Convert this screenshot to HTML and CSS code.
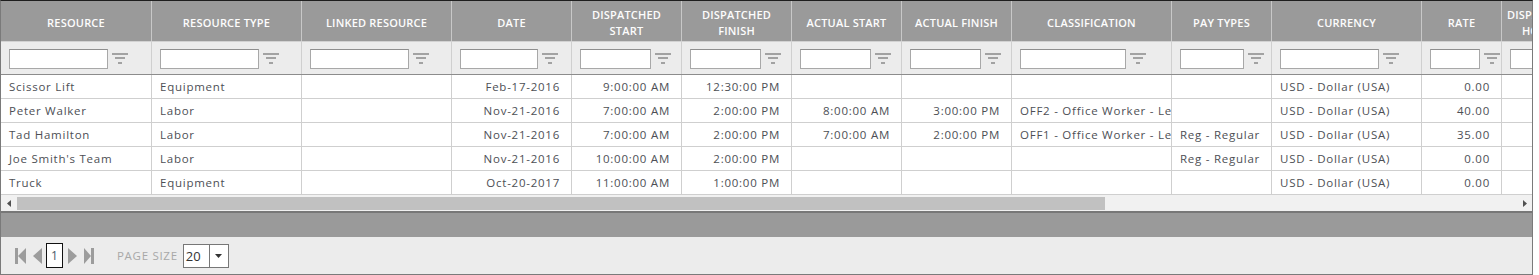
FILE: index.html
```html
<!DOCTYPE html>
<html>
<head>
<meta charset="utf-8">
<link rel="stylesheet" href="styles.css">
</head>
<body>
<div class="grid">
  <div class="grid-view">
    <div class="grid-inner">
      <div class="row head">
        <div class="hc">Resource</div>
        <div class="hc">Resource Type</div>
        <div class="hc">Linked Resource</div>
        <div class="hc">Date</div>
        <div class="hc">Dispatched<br>Start</div>
        <div class="hc">Dispatched<br>Finish</div>
        <div class="hc">Actual Start</div>
        <div class="hc">Actual Finish</div>
        <div class="hc">Classification</div>
        <div class="hc">Pay Types</div>
        <div class="hc">Currency</div>
        <div class="hc">Rate</div>
        <div class="hc">Dispatched<br>Hours</div>
        <div class="hc">Actual<br>Hours</div>
        <div class="hc">Status</div>
      </div>
      <div class="row filter">
        <div class="fc"><input class="fi" type="text"><svg class="ficon" viewBox="0 0 16 11"><rect x="0" y="0" width="16" height="2"/><rect x="3" y="4" width="10" height="2"/><rect x="6" y="9" width="4" height="2"/></svg></div>
        <div class="fc"><input class="fi" type="text"><svg class="ficon" viewBox="0 0 16 11"><rect x="0" y="0" width="16" height="2"/><rect x="3" y="4" width="10" height="2"/><rect x="6" y="9" width="4" height="2"/></svg></div>
        <div class="fc"><input class="fi" type="text"><svg class="ficon" viewBox="0 0 16 11"><rect x="0" y="0" width="16" height="2"/><rect x="3" y="4" width="10" height="2"/><rect x="6" y="9" width="4" height="2"/></svg></div>
        <div class="fc"><input class="fi" type="text"><svg class="ficon" viewBox="0 0 16 11"><rect x="0" y="0" width="16" height="2"/><rect x="3" y="4" width="10" height="2"/><rect x="6" y="9" width="4" height="2"/></svg></div>
        <div class="fc"><input class="fi" type="text"><svg class="ficon" viewBox="0 0 16 11"><rect x="0" y="0" width="16" height="2"/><rect x="3" y="4" width="10" height="2"/><rect x="6" y="9" width="4" height="2"/></svg></div>
        <div class="fc"><input class="fi" type="text"><svg class="ficon" viewBox="0 0 16 11"><rect x="0" y="0" width="16" height="2"/><rect x="3" y="4" width="10" height="2"/><rect x="6" y="9" width="4" height="2"/></svg></div>
        <div class="fc"><input class="fi" type="text"><svg class="ficon" viewBox="0 0 16 11"><rect x="0" y="0" width="16" height="2"/><rect x="3" y="4" width="10" height="2"/><rect x="6" y="9" width="4" height="2"/></svg></div>
        <div class="fc"><input class="fi" type="text"><svg class="ficon" viewBox="0 0 16 11"><rect x="0" y="0" width="16" height="2"/><rect x="3" y="4" width="10" height="2"/><rect x="6" y="9" width="4" height="2"/></svg></div>
        <div class="fc"><input class="fi" type="text"><svg class="ficon" viewBox="0 0 16 11"><rect x="0" y="0" width="16" height="2"/><rect x="3" y="4" width="10" height="2"/><rect x="6" y="9" width="4" height="2"/></svg></div>
        <div class="fc"><input class="fi" type="text"><svg class="ficon" viewBox="0 0 16 11"><rect x="0" y="0" width="16" height="2"/><rect x="3" y="4" width="10" height="2"/><rect x="6" y="9" width="4" height="2"/></svg></div>
        <div class="fc"><input class="fi" type="text"><svg class="ficon" viewBox="0 0 16 11"><rect x="0" y="0" width="16" height="2"/><rect x="3" y="4" width="10" height="2"/><rect x="6" y="9" width="4" height="2"/></svg></div>
        <div class="fc"><input class="fi" type="text"><svg class="ficon" viewBox="0 0 16 11"><rect x="0" y="0" width="16" height="2"/><rect x="3" y="4" width="10" height="2"/><rect x="6" y="9" width="4" height="2"/></svg></div>
        <div class="fc"><input class="fi" type="text"><svg class="ficon" viewBox="0 0 16 11"><rect x="0" y="0" width="16" height="2"/><rect x="3" y="4" width="10" height="2"/><rect x="6" y="9" width="4" height="2"/></svg></div>
        <div class="fc"><input class="fi" type="text"><svg class="ficon" viewBox="0 0 16 11"><rect x="0" y="0" width="16" height="2"/><rect x="3" y="4" width="10" height="2"/><rect x="6" y="9" width="4" height="2"/></svg></div>
        <div class="fc"><input class="fi" type="text"><svg class="ficon" viewBox="0 0 16 11"><rect x="0" y="0" width="16" height="2"/><rect x="3" y="4" width="10" height="2"/><rect x="6" y="9" width="4" height="2"/></svg></div>
      </div>
      <div class="row data">
        <div class="dc">Scissor Lift</div><div class="dc">Equipment</div><div class="dc"></div>
        <div class="dc num">Feb-17-2016</div><div class="dc num">9:00:00 AM</div><div class="dc num">12:30:00 PM</div>
        <div class="dc num"></div><div class="dc num"></div><div class="dc"></div><div class="dc"></div>
        <div class="dc">USD - Dollar (USA)</div><div class="dc num">0.00</div><div class="dc num"></div><div class="dc num"></div><div class="dc"></div>
      </div>
      <div class="row data">
        <div class="dc">Peter Walker</div><div class="dc">Labor</div><div class="dc"></div>
        <div class="dc num">Nov-21-2016</div><div class="dc num">7:00:00 AM</div><div class="dc num">2:00:00 PM</div>
        <div class="dc num">8:00:00 AM</div><div class="dc num">3:00:00 PM</div><div class="dc">OFF2 - Office Worker - Level 2</div><div class="dc"></div>
        <div class="dc">USD - Dollar (USA)</div><div class="dc num">40.00</div><div class="dc num"></div><div class="dc num"></div><div class="dc"></div>
      </div>
      <div class="row data">
        <div class="dc">Tad Hamilton</div><div class="dc">Labor</div><div class="dc"></div>
        <div class="dc num">Nov-21-2016</div><div class="dc num">7:00:00 AM</div><div class="dc num">2:00:00 PM</div>
        <div class="dc num">7:00:00 AM</div><div class="dc num">2:00:00 PM</div><div class="dc">OFF1 - Office Worker - Level 1</div><div class="dc">Reg - Regular</div>
        <div class="dc">USD - Dollar (USA)</div><div class="dc num">35.00</div><div class="dc num"></div><div class="dc num"></div><div class="dc"></div>
      </div>
      <div class="row data">
        <div class="dc">Joe Smith's Team</div><div class="dc">Labor</div><div class="dc"></div>
        <div class="dc num">Nov-21-2016</div><div class="dc num">10:00:00 AM</div><div class="dc num">2:00:00 PM</div>
        <div class="dc num"></div><div class="dc num"></div><div class="dc"></div><div class="dc">Reg - Regular</div>
        <div class="dc">USD - Dollar (USA)</div><div class="dc num">0.00</div><div class="dc num"></div><div class="dc num"></div><div class="dc"></div>
      </div>
      <div class="row data">
        <div class="dc">Truck</div><div class="dc">Equipment</div><div class="dc"></div>
        <div class="dc num">Oct-20-2017</div><div class="dc num">11:00:00 AM</div><div class="dc num">1:00:00 PM</div>
        <div class="dc num"></div><div class="dc num"></div><div class="dc"></div><div class="dc"></div>
        <div class="dc">USD - Dollar (USA)</div><div class="dc num">0.00</div><div class="dc num"></div><div class="dc num"></div><div class="dc"></div>
      </div>
    </div>
  </div>
  <div class="hscroll">
    <svg class="sarrow" viewBox="0 0 4 7"><polygon points="4,0 0,3.5 4,7"/></svg>
    <div class="track"><div class="thumb"></div></div>
    <svg class="sarrow" viewBox="0 0 4 7"><polygon points="0,0 4,3.5 0,7"/></svg>
  </div>
  <div class="groupbar"></div>
  <div class="pager">
    <svg class="picon first" viewBox="0 0 11 16"><rect x="0" y="0" width="3" height="16"/><polygon points="11,0 3,8 11,16"/></svg>
    <svg class="picon prev" viewBox="0 0 9 16"><polygon points="9,0 0,8 9,16"/></svg>
    <span class="pagenum">1</span>
    <svg class="picon next" viewBox="0 0 9 16"><polygon points="0,0 9,8 0,16"/></svg>
    <svg class="picon last" viewBox="0 0 10 16"><polygon points="0,0 7,8 0,16"/><rect x="7" y="0" width="3" height="16"/></svg>
    <span class="pslabel">Page Size</span>
    <span class="psize"><span class="psval">20</span><span class="psbtn"><svg viewBox="0 0 7 4"><polygon points="0,0 7,0 3.5,4"/></svg></span></span>
  </div>
</div>
</body>
</html>
```
FILE: styles.css
```css
* { box-sizing: border-box; }
html, body { margin: 0; padding: 0; background: #fff; }
body { font-family: "Open Sans", "DejaVu Sans", sans-serif; font-size: 11.5px; letter-spacing: 0.75px; color: #4d4f55; }

.grid {
  width: 1533px;
  height: 275px;
  border: 1px solid #7a7a7a;
  border-top-color: #1e1e1e;
  display: flex;
  flex-direction: column;
  overflow: hidden;
}
.grid-view { overflow: hidden; width: 100%; }
.grid-inner { width: max-content; }

.row {
  display: grid;
  grid-template-columns: 151px 150px 150px 120px 110px 110px 110px 110px 160px 100px 150px 80px 80px 110px 110px;
}

.head { height: 41px; background: #9a9a9a; border-bottom: 1px solid #d2d2d2; }
.hc {
  border-right: 1px solid #c8c8c8;
  color: #fdfdfd;
  font-weight: 600;
  text-transform: uppercase;
  font-size: 11px;
  letter-spacing: 0.2px;
  line-height: 16px;
  text-align: center;
  display: flex;
  align-items: center;
  justify-content: center;
  padding-top: 3px;
}

.filter { height: 33px; background: #ececec; border-bottom: 1px solid #8c8c8c; }
.fc {
  border-right: 1px solid #cfcfcf;
  display: flex;
  align-items: center;
  padding-left: 8px;
  padding-top: 1px;
}
.fi {
  width: 70%;
  height: 20px;
  margin: 0;
  border: 1px solid #a8a8a8;
  border-top-color: #8f8f8f;
  background: #fff;
  padding: 0 3px;
  font: inherit;
}
.ficon { width: 16px; height: 11px; margin-left: 4px; fill: #a2a2a2; }

.data { height: 24px; border-bottom: 1px solid #cfcfcf; }
.dc {
  border-right: 1px solid #cfcfcf;
  padding: 0 8px;
  line-height: 23px;
  white-space: nowrap;
  overflow: hidden;
}
.dc.num { text-align: right; padding-right: 11px; }

.hscroll {
  height: 16px;
  background: #f1f1f1;
  display: flex;
  align-items: center;
  padding: 0 5px 0 6px;
  gap: 6px;
}
.sarrow { width: 4px; height: 7px; fill: #505050; flex: none; }
.track { flex: 1; height: 13px; }
.thumb { width: 1088px; height: 13px; background: #c1c1c1; }

.groupbar { height: 26px; background: #9a9a9a; border-top: 2px solid #777; flex: none; }

.pager {
  flex: 1;
  background: #ececec;
  display: flex;
  align-items: center;
  padding-left: 14px;
}
.picon { height: 16px; fill: #9c9c9c; flex: none; }
.picon.first { width: 11px; }
.picon.prev { width: 9px; margin-left: 7px; }
.picon.next { width: 9px; margin-left: 5px; }
.picon.last { width: 10px; margin-left: 7px; }
.pagenum {
  margin-left: 4px;
  width: 17px;
  height: 25px;
  border: 1px solid #111;
  background: #fff;
  color: #4a5a6a;
  font-size: 12px;
  letter-spacing: 0;
  display: flex;
  align-items: center;
  justify-content: center;
}
.pslabel {
  margin-left: 23px;
  color: #a8a8a8;
  text-transform: uppercase;
  font-size: 11.5px;
  letter-spacing: 0.7px;
}
.psize {
  margin-left: 5px;
  width: 46px;
  height: 24px;
  border: 1px solid #777;
  background: #fff;
  display: flex;
  letter-spacing: 0;
}
.psval { width: 26px; font-size: 13px; color: #333; line-height: 22px; padding-left: 2px; border-right: 1px solid #777; }
.psbtn { flex: 1; display: flex; align-items: center; justify-content: center; }
.psbtn svg { width: 7px; height: 4px; fill: #333; }
```
